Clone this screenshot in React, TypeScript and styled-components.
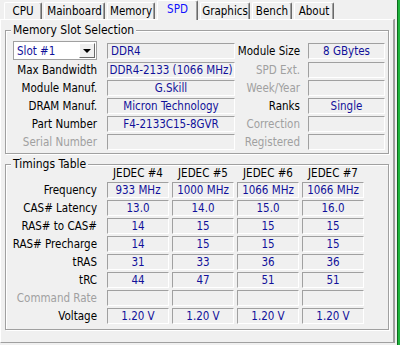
import { Fragment } from "react";
import { createGlobalStyle, styled } from "styled-components";

const GlobalStyle = createGlobalStyle`
  html, body {
    margin: 0;
    padding: 0;
    background-color: #f0f0f0;
  }
  body {
    font-family: "DejaVu Sans Condensed", "Liberation Sans", Arial, sans-serif;
    font-size: 11.5px;
    color: #000;
  }
`;

const Window = styled.div`
  display: flex;
  width: 400px;
  height: 345px;
  overflow: hidden;
`;

const Main = styled.div`
  width: 397px;
  display: flex;
  flex-direction: column;
`;

const GreenEdge = styled.div`
  width: 3px;
  background-color: #1fb33c;
  border-left: 1px solid #0d6a1e;
  box-sizing: border-box;
`;

const TabBar = styled.div`
  display: flex;
  align-items: flex-end;
  gap: 2px;
  height: 19px;
  padding-left: 4px;
`;

const Tab = styled.div<{ $width: number; $active?: boolean }>`
  position: relative;
  z-index: ${(p) => (p.$active ? 1 : 0)};
  width: ${(p) => p.$width}px;
  height: ${(p) => (p.$active ? 20 : 17)}px;
  margin-bottom: ${(p) => (p.$active ? -1 : 0)}px;
  box-sizing: border-box;
  display: flex;
  align-items: center;
  justify-content: center;
  padding-bottom: ${(p) => (p.$active ? 3 : 0)}px;
  background-color: #f0f0f0;
  border-top: 1px solid #fff;
  border-left: 1px solid #fff;
  border-right: 1px solid #696969;
  box-shadow: inset -1px 0 0 #a0a0a0;
  border-radius: 2px 2px 0 0;
  color: ${(p) => (p.$active ? "#1010ff" : "#000")};
  white-space: nowrap;
`;

const Panel = styled.div`
  width: 394px;
  box-sizing: border-box;
  border-top: 1px solid #fff;
  border-left: 1px solid #fff;
  border-right: 1px solid #a0a0a0;
  border-bottom: 1px solid #a0a0a0;
  box-shadow: 1px 0 0 #a0a0a0;
  padding: 10px 0 12px 4px;
  display: flex;
  flex-direction: column;
  gap: 10px;
`;

const Group = styled.div`
  position: relative;
  width: 384px;
  box-sizing: border-box;
  border: 1px solid #a0a0a0;
  box-shadow: inset 1px 1px 0 #fff, 1px 1px 0 #fff;
`;

const Legend = styled.span`
  position: absolute;
  left: 5px;
  top: -8px;
  padding: 0 2px;
  background-color: #f0f0f0;
  line-height: 14px;
  font-size: 12px;
`;

const SlotGrid = styled.div`
  display: grid;
  grid-template-columns: 94px 128px 73px 77px;
  grid-template-rows: 19px repeat(5, 16px);
  row-gap: 2px;
  padding: 10px 0 3px 7px;
`;

const TimingsGrid = styled.div`
  display: grid;
  grid-template-columns: 91px repeat(4, 62px);
  grid-template-rows: 13px repeat(8, 16px);
  column-gap: 3px;
  row-gap: 2px;
  padding: 2px 0 5px 7px;
`;

const Label = styled.div<{ $disabled?: boolean; $pad?: number }>`
  display: flex;
  align-items: center;
  justify-content: flex-end;
  padding-right: ${(p) => p.$pad ?? 10}px;
  color: ${(p) => (p.$disabled ? "#a0a0a0" : "#000")};
  white-space: nowrap;
`;

const ColHead = styled.div`
  display: flex;
  align-items: center;
  justify-content: center;
  line-height: 13px;
`;

const Field = styled.div<{ $left?: boolean }>`
  align-self: center;
  height: 16px;
  box-sizing: border-box;
  border-top: 1px solid #a0a0a0;
  border-left: 1px solid #a0a0a0;
  border-right: 1px solid #fff;
  border-bottom: 1px solid #fff;
  padding: 0 3px;
  display: flex;
  align-items: center;
  justify-content: ${(p) => (p.$left ? "flex-start" : "center")};
  color: #10109a;
  white-space: nowrap;
  overflow: hidden;
`;

const ComboBox = styled.div`
  width: 84px;
  height: 19px;
  box-sizing: border-box;
  border: 1px solid #a0a0a0;
  background-color: #fff;
  display: flex;
  align-items: center;
  justify-content: space-between;
  padding: 1px 1px 1px 3px;
  color: #10109a;
`;

const DropButton = styled.div`
  width: 16px;
  height: 15px;
  box-sizing: border-box;
  background-color: #f0f0f0;
  border-top: 1px solid #fff;
  border-left: 1px solid #fff;
  border-right: 1px solid #696969;
  border-bottom: 1px solid #696969;
  display: flex;
  align-items: center;
  justify-content: center;

  &::after {
    content: "";
    border-left: 4px solid transparent;
    border-right: 4px solid transparent;
    border-top: 4px solid #000;
  }
`;

const slotRows = [
  { left: "Max Bandwidth", value: "DDR4-2133 (1066 MHz)", right: "SPD Ext.", rv: "", rd: true },
  { left: "Module Manuf.", value: "G.Skill", right: "Week/Year", rv: "", rd: true },
  { left: "DRAM Manuf.", value: "Micron Technology", right: "Ranks", rv: "Single", rd: false },
  { left: "Part Number", value: "F4-2133C15-8GVR", right: "Correction", rv: "", rd: true },
  { left: "Serial Number", value: "", right: "Registered", rv: "", rd: true, ld: true },
];

const timings = [
  { label: "Frequency", values: ["933 MHz", "1000 MHz", "1066 MHz", "1066 MHz"] },
  { label: "CAS# Latency", values: ["13.0", "14.0", "15.0", "16.0"] },
  { label: "RAS# to CAS#", values: ["14", "15", "15", "15"] },
  { label: "RAS# Precharge", values: ["14", "15", "15", "15"] },
  { label: "tRAS", values: ["31", "33", "36", "36"] },
  { label: "tRC", values: ["44", "47", "51", "51"] },
  { label: "Command Rate", values: ["", "", "", ""], disabled: true },
  { label: "Voltage", values: ["1.20 V", "1.20 V", "1.20 V", "1.20 V"] },
];

const tabs = [
  { name: "CPU", width: 38 },
  { name: "Mainboard", width: 61 },
  { name: "Memory", width: 48 },
  { name: "SPD", width: 41, active: true },
  { name: "Graphics", width: 50 },
  { name: "Bench", width: 40 },
  { name: "About", width: 40 },
];

export default function App() {
  return (
    <>
      <GlobalStyle />
      <Window>
        <Main>
          <TabBar>
            {tabs.map((t) => (
              <Tab key={t.name} $width={t.width} $active={t.active}>
                {t.name}
              </Tab>
            ))}
          </TabBar>
          <Panel>
            <Group>
              <Legend>Memory Slot Selection</Legend>
              <SlotGrid>
                <div>
                  <ComboBox>
                    <span>Slot #1</span>
                    <DropButton />
                  </ComboBox>
                </div>
                <Field $left>DDR4</Field>
                <Label $pad={8}>Module Size</Label>
                <Field>8 GBytes</Field>
                {slotRows.map((r) => (
                  <Fragment key={r.left}>
                    <Label $disabled={r.ld}>{r.left}</Label>
                    <Field>{r.value}</Field>
                    <Label $pad={8} $disabled={r.rd}>
                      {r.right}
                    </Label>
                    <Field>{r.rv}</Field>
                  </Fragment>
                ))}
              </SlotGrid>
            </Group>
            <Group>
              <Legend>Timings Table</Legend>
              <TimingsGrid>
                <div />
                <ColHead>JEDEC #4</ColHead>
                <ColHead>JEDEC #5</ColHead>
                <ColHead>JEDEC #6</ColHead>
                <ColHead>JEDEC #7</ColHead>
                {timings.map((row) => (
                  <Fragment key={row.label}>
                    <Label $pad={7} $disabled={row.disabled}>
                      {row.label}
                    </Label>
                    {row.values.map((v, i) => (
                      <Field key={i}>{v}</Field>
                    ))}
                  </Fragment>
                ))}
              </TimingsGrid>
            </Group>
          </Panel>
        </Main>
        <GreenEdge />
      </Window>
    </>
  );
}
